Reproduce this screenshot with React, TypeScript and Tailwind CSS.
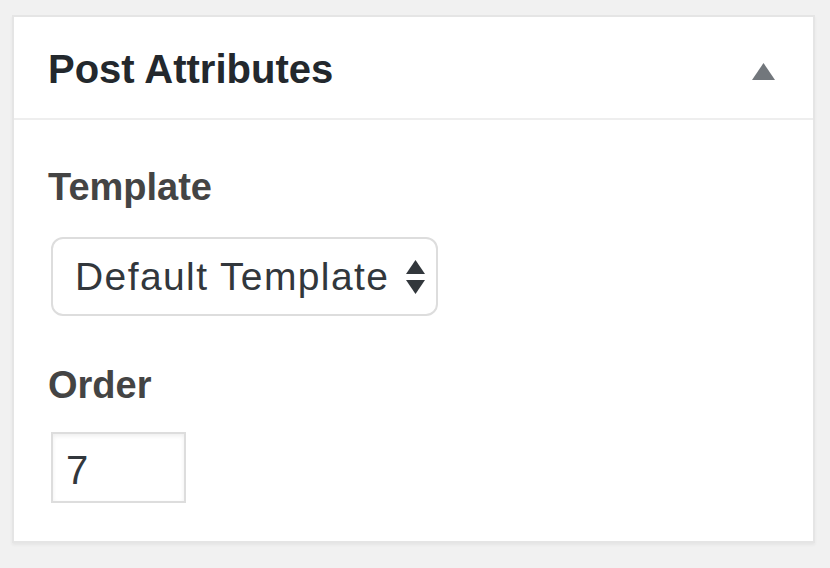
import React from 'react';

const font = { fontFamily: '"Liberation Sans", Arial, sans-serif' };

const App = () => {
  return (
    <div className="min-h-[568px] w-[830px] bg-[#f1f1f1] pt-[15px] pl-[12px]" style={font}>
      <div className="w-[803px] border-2 border-[#e5e5e5] bg-white shadow-[0_2px_3px_rgba(0,0,0,0.05)]">
        {/* Header */}
        <div className="flex h-[103px] items-start justify-between border-b-2 border-[#eee] pl-[34px] pr-[38px]">
          <h2 className="pt-[32px] text-[40px] leading-[40px] font-bold text-[#23282d]">Post Attributes</h2>
          <svg width="23" height="17" viewBox="0 0 23 17" className="mt-[46px]">
            <polygon points="11.5,0 23,17 0,17" fill="#72777c" />
          </svg>
        </div>

        {/* Contenido */}
        <div className="pl-[34px] pt-[48px] pb-[38px]">
          <div className="text-[38px] leading-[38px] font-bold text-[#444]">Template</div>
          <div className="ml-[3px] mt-[31px] flex h-[79px] w-[387px] items-center justify-between rounded-[12px] border-2 border-[#ddd] pl-[22px] pr-[11px]">
            <span className="text-[39px] leading-[39px] tracking-[1.4px] text-[#32373c]">Default Template</span>
            <svg width="19" height="34" viewBox="0 0 19 34">
              <polygon points="9.5,0 19,14 0,14" fill="#32373c" />
              <polygon points="0,20 19,20 9.5,34" fill="#32373c" />
            </svg>
          </div>

          <div className="mt-[50px] text-[38px] leading-[38px] font-bold text-[#444]">Order</div>
          <div className="ml-[3px] mt-[28px] flex h-[71px] w-[135px] items-center border-2 border-[#ddd] pl-[13px] pt-[5px] shadow-[inset_0_2px_4px_rgba(0,0,0,0.07)]">
            <span className="text-[40px] leading-[40px] text-[#32373c]">7</span>
          </div>
        </div>
      </div>
    </div>
  );
};

export default App;
